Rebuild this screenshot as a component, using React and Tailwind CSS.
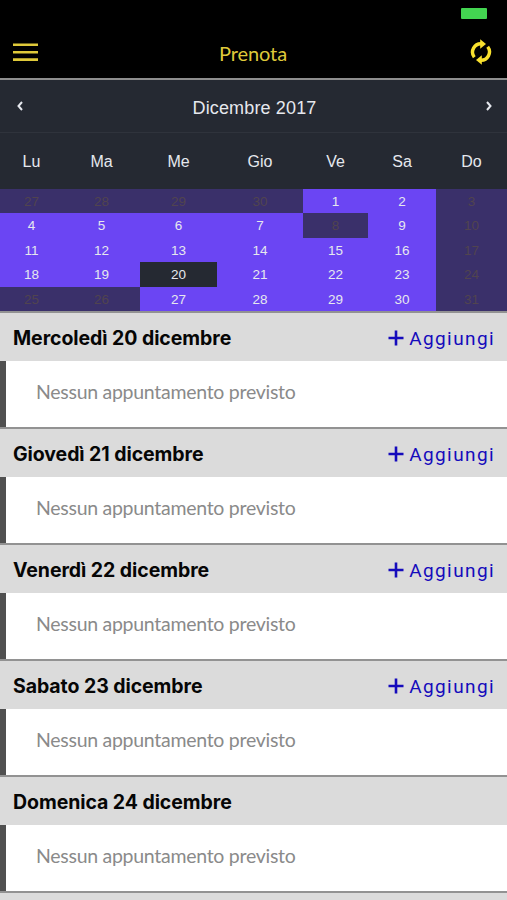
import { clsx } from "clsx";

const weekDays = ["Lu", "Ma", "Me", "Gio", "Ve", "Sa", "Do"];

const weeks = [
  [27, 28, 29, 30, 1, 2, 3],
  [4, 5, 6, 7, 8, 9, 10],
  [11, 12, 13, 14, 15, 16, 17],
  [18, 19, 20, 21, 22, 23, 24],
  [25, 26, 27, 28, 29, 30, 31],
];

// closed days, as "row-column"
const disabledDays = ["0-0", "0-1", "0-2", "0-3", "1-4", "4-0", "4-1"];

const agenda = [
  { label: "Mercoledì 20 dicembre", canAdd: true },
  { label: "Giovedì 21 dicembre", canAdd: true },
  { label: "Venerdì 22 dicembre", canAdd: true },
  { label: "Sabato 23 dicembre", canAdd: true },
  { label: "Domenica 24 dicembre", canAdd: false },
];

const columns = "grid grid-cols-[63px_77px_77px_86px_65px_68px_71px]";

const Header = () => (
  <header className="h-[80px] shrink-0 bg-black border-b-2 border-[#8e8e8e] flex flex-col text-[#f8e02e]">
    <div className="h-[26px] flex justify-end pt-2 pr-5">
      <div className="w-[26px] h-[11px] rounded-[1px] bg-[#43d551]" />
    </div>
    <div className="grid grid-cols-[1fr_auto_1fr] items-center h-[52px] pl-[13px] pr-[15px]">
      <button aria-label="Menu">
        <svg width="25" height="18" viewBox="0 0 25 18" stroke="#dfc93a" strokeWidth="2.6">
          <path d="M0 1.8H25M0 9.2H25M0 16.6H25" />
        </svg>
      </button>
      <h1 className="font-['Lato',sans-serif] text-[20px] leading-6 tracking-[-0.1px] pt-[2px] pl-[1px] text-[#dfc93a]">
        Prenota
      </h1>
      <button className="justify-self-end" aria-label="Aggiorna">
        <svg width="22" height="26" viewBox="0 0 22 26" fill="none" stroke="currentColor" strokeWidth="3.4">
          <path d="M4.3 18.2A8.4 8.4 0 0 1 11.5 4.7" />
          <path d="M17.7 7.8A8.4 8.4 0 0 1 10.5 21.3" />
          <path d="M10.2 0.2L16 5L10.2 9.8Z" fill="currentColor" stroke="none" />
          <path d="M11.8 25.8L6 21L11.8 16.2Z" fill="currentColor" stroke="none" />
        </svg>
      </button>
    </div>
  </header>
);

const Chevron = ({ d }) => (
  <svg width="6" height="10" viewBox="0 0 6 10" fill="none" stroke="currentColor" strokeWidth="2">
    <path d={d} />
  </svg>
);

const Calendar = () => (
  <section className="shrink-0 bg-[#252932] text-[#e6e8ee] font-['Liberation_Sans',sans-serif]">
    <div className="h-[53px] border-b border-[#2f333c] flex items-center justify-between pl-[17px] pr-[15px]">
      <Chevron d="M5 1L1.5 5L5 9" />
      <span className="text-[18px] leading-6 pt-[3px] tracking-[0.15px]">Dicembre 2017</span>
      <Chevron d="M1 1L4.5 5L1 9" />
    </div>
    <div className={clsx(columns, "h-[56px] items-center text-center text-[16px] pt-[2px]")}>
      {weekDays.map((day) => (
        <span key={day}>{day}</span>
      ))}
    </div>
    {weeks.map((week, row) => (
      <div key={row} className={clsx(columns, "h-[24.4px] text-center text-[13.5px] leading-[26px]")}>
        {week.map((day, col) => {
          const disabled = col === 6 || disabledDays.includes(`${row}-${col}`);
          const selected = row === 3 && col === 2;
          return (
            <span
              key={col}
              className={clsx(
                "h-[24.4px]",
                disabled && "bg-[#3a306a] text-[#51444f]",
                selected && "bg-[#252932]",
                !disabled && !selected && "bg-[#6b45f3]"
              )}
            >
              {day}
            </span>
          );
        })}
      </div>
    ))}
  </section>
);

const AddButton = () => (
  <button className="flex items-center gap-[5px] pt-[3px] text-[#150bbc]">
    <svg width="16" height="16" viewBox="0 0 16 16" stroke="currentColor" strokeWidth="2.6">
      <path d="M8 0.5V15.5M0.5 8H15.5" />
    </svg>
    <span className="font-['Roboto',sans-serif] text-[19px] leading-6 tracking-[1.4px] pt-[2px] -mr-[1px]">
      Aggiungi
    </span>
  </button>
);

const DayHeader = ({ label, canAdd }) => (
  <div className="h-[50px] border-t-2 border-[#929292] bg-[#dbdbdb] flex items-center justify-between pl-[13px] pr-[13px]">
    <h2 className="font-['Inter',sans-serif] font-bold text-[19.5px] leading-6 tracking-[-0.07px] pt-[2px] text-[#060606]">
      {label}
    </h2>
    {canAdd && <AddButton />}
  </div>
);

const App = () => (
  <div className="w-[507px] h-[900px] overflow-hidden flex flex-col bg-white">
    <Header />
    <Calendar />
    <main className="grow overflow-hidden">
      {agenda.map((day) => (
        <div key={day.label}>
          <DayHeader label={day.label} canAdd={day.canAdd} />
          <div className="h-[66px] border-l-[6px] border-[#505050] pl-[30px] flex items-center">
            <p className="font-['Lato',sans-serif] text-[19.5px] leading-6 pb-[3px] tracking-[-0.28px] text-[#8a8a8a]">
              Nessun appuntamento previsto
            </p>
          </div>
        </div>
      ))}
      <div className="h-[50px] border-t-2 border-[#929292] bg-[#dbdbdb]" />
    </main>
  </div>
);

export default App;
